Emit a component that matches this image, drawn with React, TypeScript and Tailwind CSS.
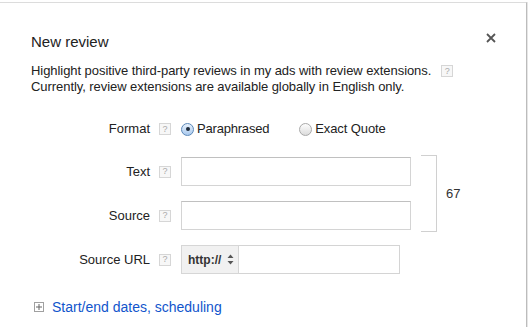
import React from "react";

const font = { fontFamily: '"Liberation Sans", Arial, sans-serif' };

function Help() {
  return (
    <span className="flex h-[12px] w-[12px] shrink-0 items-center justify-center border border-[#d6d6d6] bg-[#f7f7f7] text-[9px] leading-none text-[#aaa]">
      ?
    </span>
  );
}

function Radio({ checked }: { checked?: boolean }) {
  return (
    <span
      className={[
        "flex h-[13px] w-[13px] shrink-0 items-center justify-center rounded-full border",
        checked
          ? "border-[#5b88b8] bg-gradient-to-b from-[#e8f1fb] to-[#a9c9ee]"
          : "border-[#a9a9a9] bg-gradient-to-b from-[#fdfdfd] to-[#dcdcdc]",
      ].join(" ")}
    >
      {checked && <span className="h-[4px] w-[4px] rounded-full bg-[#1d2a3a]" />}
    </span>
  );
}

function Label({ children }: { children: React.ReactNode }) {
  return (
    <>
      <div className="w-[119px] shrink-0 text-right">{children}</div>
      <div className="ml-[9px]">
        <Help />
      </div>
    </>
  );
}

export default function App() {
  return (
    <div className="h-[327px] w-[529px] overflow-hidden bg-white" style={font}>
      <div className="mt-[2px] h-[340px] w-[527px] border-t border-r border-t-[#dcdcdc] border-r-[#bcbcbc] pl-[31px] pr-[30px] pt-[29px] text-[13px] leading-[16px] text-[#222] shadow-[1px_0_0_#e6e6e6]">
        {/* header */}
        <div className="flex items-start justify-between">
          <h1 className="text-[15px] leading-[20px] text-[#222]">New review</h1>
          <svg width="10" height="10" viewBox="0 0 10 10" className="mt-[1px]">
            <path d="M1 1L9 9M9 1L1 9" stroke="#555" strokeWidth="1.8" />
          </svg>
        </div>

        <div className="mt-[11px] tracking-[-0.06px]">
          <div className="flex items-center">
            Highlight positive third-party reviews in my ads with review extensions.
            <span className="ml-[10px]">
              <Help />
            </span>
          </div>
          <div>Currently, review extensions are available globally in English only.</div>
        </div>

        {/* format */}
        <div className="mt-[26px] flex h-[16px] items-center">
          <Label>Format</Label>
          <div className="ml-[10px] flex items-center">
            <Radio checked />
            <span className="ml-[3px] tracking-[-0.2px]">Paraphrased</span>
          </div>
          <div className="ml-[30px] flex items-center">
            <Radio />
            <span className="ml-[3px] tracking-[-0.1px]">Exact Quote</span>
          </div>
        </div>

        {/* text + source with counter */}
        <div className="mt-[18px] flex items-center">
          <div className="flex flex-col gap-[15px]">
            <div className="flex h-[29px] items-center">
              <Label>Text</Label>
              <input className="ml-[10px] h-[29px] w-[230px] border border-[#d4d4d4] border-t-[#c0c0c0] outline-none" />
            </div>
            <div className="flex h-[29px] items-center">
              <Label>Source</Label>
              <input className="ml-[10px] h-[29px] w-[230px] border border-[#d4d4d4] border-t-[#c0c0c0] outline-none" />
            </div>
          </div>
          <div className="ml-[10px] h-[77px] w-[16px] border-y border-r border-[#d0d0d0]" />
          <div className="ml-[9px] text-[#333]">67</div>
        </div>

        {/* source url */}
        <div className="mt-[13px] flex h-[29px] items-center">
          <Label>Source URL</Label>
          <div className="ml-[10px] flex h-[29px]">
            <div className="flex w-[58px] items-center border border-[#d6d6d6] bg-[#f1f1f1] pl-[6px] text-[12px] font-bold text-[#333]">
              http://
              <svg width="7" height="11" viewBox="0 0 7 11" className="ml-[6px]">
                <path d="M3.5 0.5L6.5 4H0.5Z M3.5 10.5L6.5 7H0.5Z" fill="#555" />
              </svg>
            </div>
            <input className="h-[29px] w-[161px] border border-l-0 border-[#d4d4d4] outline-none" />
          </div>
        </div>

        {/* advanced link */}
        <div className="mt-[25px] flex items-center">
          <span className="ml-[3px] flex h-[10px] w-[10px] items-center justify-center border border-[#a0a0a0]">
            <svg width="8" height="8" viewBox="0 0 8 8">
              <path d="M4 1V7M1 4H7" stroke="#666" strokeWidth="1" />
            </svg>
          </span>
          <a className="ml-[8px] text-[14px] text-[#15c]">Start/end dates, scheduling</a>
        </div>
      </div>
    </div>
  );
}
